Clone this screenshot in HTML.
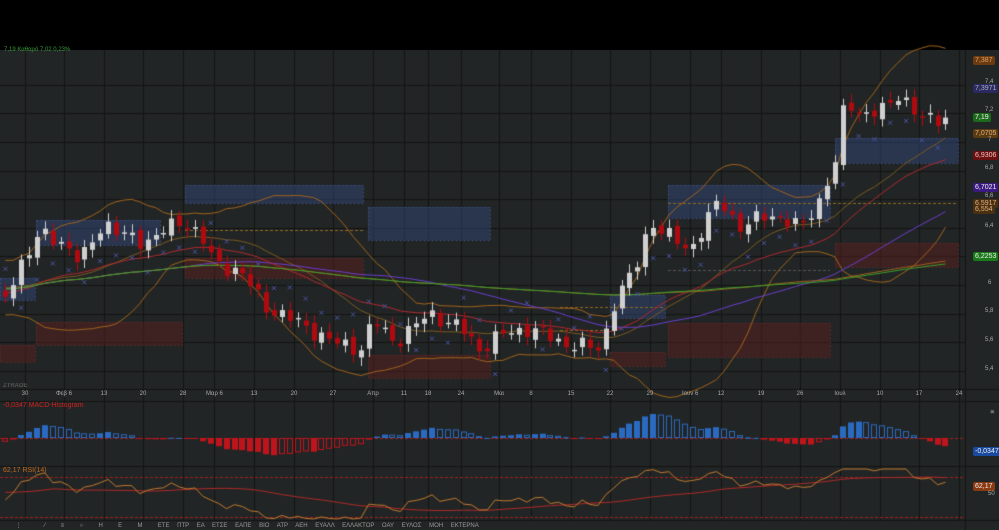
<!DOCTYPE html>
<html><head><meta charset="utf-8"><style>
html,body{margin:0;padding:0;background:#000;width:999px;height:530px;overflow:hidden;font-family:"Liberation Sans",sans-serif}
#wrap{position:absolute;left:0;top:50px;width:999px;height:480px;background:#222525}
canvas{position:absolute;left:0;top:0}
.t{position:absolute;font-size:7px;color:#aaa;white-space:nowrap}
.lab{position:absolute;font-size:7px;color:#eee;padding:1px 2px;border-radius:2px;left:973px;white-space:nowrap}
</style></head><body>
<div id="wrap"></div>
<canvas id="c" width="999" height="530"></canvas>
<div class="t" style="left:4px;top:47px;color:#3a9a3a;font-size:6px">7,19 Καθαρό 7,02 0,23%</div>
<div class="t" style="left:3px;top:383px;color:#555;font-size:6px;font-weight:bold">ZTRADE</div>
<div id="ax"></div>
<div class="t" style="left:3px;top:402px;color:#d02020">-0,0347 MACD-Histogram</div>
<div class="t" style="left:3px;top:467px;color:#c06a20">62,17 RSI(14)</div>
<div class="lab" style="top:56px;background:#6a3a10;color:#e0a060">7,387</div>
<div class="t" style="left:985px;top:79px;font-size:6px">7,4</div>
<div class="lab" style="top:84px;background:#2a2a60;color:#aab">7,3971</div>
<div class="t" style="left:985px;top:107px;font-size:6px">7,2</div>
<div class="lab" style="top:113px;background:#1a6a1a">7,19</div>
<div class="lab" style="top:129px;background:#5a3a10;color:#e0b080">7,0705</div>
<div class="t" style="left:988px;top:137px;font-size:6px">7</div>
<div class="lab" style="top:151px;background:#6a1010;color:#f0c0c0">6,9306</div>
<div class="t" style="left:985px;top:165px;font-size:6px">6,8</div>
<div class="lab" style="top:183px;background:#3a1a80">6,7021</div>
<div class="t" style="left:985px;top:193px;font-size:6px">6,6</div>
<div class="lab" style="top:199px;background:#4a3010;color:#e0b080">6,5917</div>
<div class="lab" style="top:205px;background:#4a3010;color:#e0b080">6,554</div>
<div class="t" style="left:985px;top:223px;font-size:6px">6,4</div>
<div class="lab" style="top:252px;background:#1a7a1a">6,2253</div>
<div class="t" style="left:988px;top:280px;font-size:6px">6</div>
<div class="t" style="left:985px;top:308px;font-size:6px">5,8</div>
<div class="t" style="left:985px;top:337px;font-size:6px">5,6</div>
<div class="t" style="left:985px;top:366px;font-size:6px">5,4</div>
<div class="lab" style="top:447px;background:#1a4aa0">-0,0347</div>
<div class="lab" style="top:482px;background:#8a3a10">62,17</div>
<div class="t" style="left:988px;top:491px;font-size:6px">50</div>
<div class="t" style="left:0px;top:522px;font-size:6px;color:#999;word-spacing:6px">&nbsp;&nbsp;⋮ &nbsp;&nbsp;⁄ &nbsp;≡ &nbsp;○ &nbsp;Η &nbsp;E &nbsp;M &nbsp;ΕΤΕ ΠΤΡ ΕΑ ΕΤΣΕ ΕΑΠΕ ΒΙΟ ΑΤΡ ΑΕΗ ΕΥΑΛΛ ΕΛΛΑΚΤΟΡ ΟΑΥ ΕΥΛΟΣ ΜΟΗ ΕΚΤΕΡΝΑ</div>
<script>
var c=document.getElementById('c').getContext('2d');
function Y(p){return 142-(p-7)*143;}
c.strokeStyle='#141616';c.lineWidth=1;
var gx=[25,64,104,143,183,214,254,294,333,373,404,428,461,499,531,571,610,650,690,721,761,800,840,880,919,959];
gx.forEach(function(x){c.beginPath();c.moveTo(x+.5,50);c.lineTo(x+.5,520);c.stroke();});
[7.4,7.2,7,6.8,6.6,6.4,6.2,6,5.8,5.6,5.4].forEach(function(p){c.beginPath();c.moveTo(0,Math.round(Y(p))+.5);c.lineTo(965,Math.round(Y(p))+.5);c.stroke();});
c.beginPath();c.moveTo(965.5,50);c.lineTo(965.5,530);c.stroke();
[389,401,466,520].forEach(function(y){c.beginPath();c.moveTo(0,y+.5);c.lineTo(999,y+.5);c.stroke();});
var names=['30','Φεβ 6','13','20','28','Μαρ 6','13','20','27','Απρ','11','18','24','Μαι','8','15','22','29','Ιουν 6','12','19','26','Ιουλ','10','17','24'];
var ax='';gx.forEach(function(x,i){ax+='<div class="t" style="left:'+(x-8)+'px;top:391px;width:16px;text-align:center;font-size:6px">'+names[i]+'</div>';});
document.getElementById('ax').innerHTML=ax;
function rect(x1,y1,x2,y2,f,s){c.fillStyle=f;c.fillRect(x1,y1,x2-x1,y2-y1);c.strokeStyle=s;c.setLineDash([2,2]);c.strokeRect(x1+.5,y1+.5,x2-x1,y2-y1);c.setLineDash([]);}
var B='rgba(50,70,120,0.5)',Bs='#3a4a7a',R='rgba(90,30,30,0.5)',Rs='#5a2a2a';
rect(36,220,160,245,B,Bs);rect(185,185,363,203,B,Bs);rect(368,207,490,240,B,Bs);rect(668,185,830,218,B,Bs);rect(835,138,958,163,B,Bs);rect(0,278,35,300,B,Bs);rect(610,295,665,318,B,Bs);
rect(36,322,182,345,R,Rs);rect(185,258,363,278,R,Rs);rect(368,355,490,378,R,Rs);rect(668,323,830,357,R,Rs);rect(835,243,958,267,R,Rs);rect(0,345,35,362,R,Rs);rect(610,352,665,366,R,Rs);
c.strokeStyle='#8a6a20';c.setLineDash([3,2]);
[[185,230,363],[668,203,958],[560,307,665],[560,330,610]].forEach(function(a){c.beginPath();c.moveTo(a[0],a[1]+.5);c.lineTo(a[2],a[1]+.5);c.stroke();});
c.strokeStyle='#555';[[668,270,830]].forEach(function(a){c.beginPath();c.moveTo(a[0],a[1]+.5);c.lineTo(a[2],a[1]+.5);c.stroke();});
c.setLineDash([]);
var kp=[[-200,5.9],[-100,6.1],[-20,5.85],[5,5.9],[20,6.15],[40,6.35],[64,6.3],[80,6.15],[104,6.45],[120,6.35],[143,6.3],[183,6.45],[200,6.35],[214,6.15],[240,6.1],[265,5.85],[294,5.75],[333,5.6],[360,5.55],[373,5.75],[395,5.6],[430,5.8],[460,5.7],[480,5.55],[500,5.65],[530,5.7],[560,5.6],[600,5.55],[615,5.9],[635,6.1],[650,6.45],[665,6.35],[690,6.25],[720,6.6],[740,6.4],[770,6.5],[800,6.4],[820,6.6],[835,6.85],[845,7.3],[860,7.2],[880,7.2],[900,7.35],[920,7.15],[950,7.18]];
function interp(x){for(var i=1;i<kp.length;i++){if(x<=kp[i][0]){var a=kp[i-1],b=kp[i];return a[1]+(b[1]-a[1])*(x-a[0])/(b[0]-a[0]);}}return kp[kp.length-1][1];}
var xs=[],cl=[],op=[],hi=[],lo=[];
for(var x=-200,i=0;x<=951;x+=7.9,i++){var p=interp(x)+0.04*Math.sin(i*2.3)+0.025*Math.sin(i*5.1);xs.push(x);cl.push(p);}
for(var i=0;i<cl.length;i++){var o=i?cl[i-1]+0.02*Math.sin(i*3.7):cl[i];op.push(o);hi.push(Math.max(o,cl[i])+0.03+0.03*Math.abs(Math.sin(i*1.9)));lo.push(Math.min(o,cl[i])-0.03-0.03*Math.abs(Math.cos(i*2.7)));}
function sma(n){var r=[];for(var i=0;i<cl.length;i++){var s=0,k=0;for(var j=Math.max(0,i-n+1);j<=i;j++){s+=cl[j];k++;}r.push(s/k);}return r;}
function ema(n){var r=[],a=2/(n+1),e=cl[0];for(var i=0;i<cl.length;i++){e=e+a*(cl[i]-e);r.push(e);}return r;}
function line(arr,col,w,fy){c.strokeStyle=col;c.lineWidth=w||1;c.beginPath();var st=false;for(var i=0;i<arr.length;i++){if(xs[i]<0)continue;var y=fy?fy(arr[i]):Y(arr[i]);if(!st){c.moveTo(xs[i],y);st=true;}else c.lineTo(xs[i],y);}c.stroke();}
var m20=sma(20);var up=[],dn=[];
for(var i=0;i<cl.length;i++){var s=0,k=0;for(var j=Math.max(0,i-19);j<=i;j++){s+=(cl[j]-m20[i])*(cl[j]-m20[i]);k++;}var sd=Math.sqrt(s/k);up.push(m20[i]+2*sd+0.02);dn.push(m20[i]-2*sd-0.02);}
line(up,'#a0641c');line(dn,'#a0641c');line(m20,'#7a5a20');
line(sma(50),'#6a3fd0');line(ema(30),'#b02a30');line(sma(100),'#a06020');line(sma(200),'#3aa02a');
c.strokeStyle='#4b56a8';c.lineWidth=1;
for(var i=0;i<cl.length;i++){if(xs[i]<0||i%2)continue;var upt=cl[i]>m20[i];var p=upt?lo[i]-0.1:hi[i]+0.1;var x=xs[i],y=Y(p);c.beginPath();c.moveTo(x-2,y-2);c.lineTo(x+2,y+2);c.moveTo(x+2,y-2);c.lineTo(x-2,y+2);c.stroke();}
for(var i=0;i<cl.length;i++){var x=Math.round(xs[i]);if(x<0)continue;var u=cl[i]>=op[i];var col=u?'#d0d0d0':'#b00a10';c.strokeStyle=col;c.fillStyle=col;c.beginPath();c.moveTo(x+.5,Y(hi[i]));c.lineTo(x+.5,Y(lo[i]));c.stroke();var t=Y(Math.max(op[i],cl[i])),b=Y(Math.min(op[i],cl[i]));c.fillRect(x-2,t,5,Math.max(1.5,b-t));}
var e12=ema(12),e26=ema(26),mc=[],sg=[];for(var i=0;i<cl.length;i++)mc.push(e12[i]-e26[i]);var a=2/10,e=mc[0];for(var i=0;i<cl.length;i++){e=e+a*(mc[i]-e);sg.push(e);}
var mx=0;for(var i=0;i<cl.length;i++)if(xs[i]>=0)mx=Math.max(mx,Math.abs(mc[i]-sg[i]));var sc=24/mx;
c.setLineDash([3,2]);c.strokeStyle='#a02020';c.beginPath();c.moveTo(0,438.5);c.lineTo(965,438.5);c.stroke();c.setLineDash([]);
for(var i=1;i<cl.length;i++){var x=Math.round(xs[i]);if(x<0)continue;var h=(mc[i]-sg[i])*sc;var rising=(mc[i]-sg[i])>(mc[i-1]-sg[i-1]);var col=h>=0?'#2a6ac0':'#c0141c';var y=h>=0?438-h:438;var hh=Math.max(1,Math.abs(h));if((h>=0&&rising)||(h<0&&!rising)){c.fillStyle=col;c.fillRect(x-3,y,6,hh);}else{c.strokeStyle=col;c.strokeRect(x-2.5,y+.5,5,hh-1);}}
var rsi=[],ag=0,al=0;for(var i=0;i<cl.length;i++){var d=i?cl[i]-cl[i-1]:0;ag=(ag*13+Math.max(d,0))/14;al=(al*13+Math.max(-d,0))/14;rsi.push(al==0?50:100-100/(1+ag/al));}
function RY(v){return Math.max(469,Math.min(519,497-(v-50)*1.0));}
c.setLineDash([3,2]);c.strokeStyle='#a02020';[477,517].forEach(function(y){c.beginPath();c.moveTo(0,y+.5);c.lineTo(965,y+.5);c.stroke();});c.setLineDash([]);
var rm=[];for(var i=0;i<rsi.length;i++){var s=0,k=0;for(var j=Math.max(0,i-29);j<=i;j++){s+=rsi[j];k++;}rm.push(s/k);}
line(rm,'#b02a2a',1,RY);line(rsi,'#c07a30',1,RY);
c.fillStyle='#ccc';c.font='8px "Liberation Sans"';c.fillText('×',990,414);c.fillText('×',990,486);
</script>
</body></html>
